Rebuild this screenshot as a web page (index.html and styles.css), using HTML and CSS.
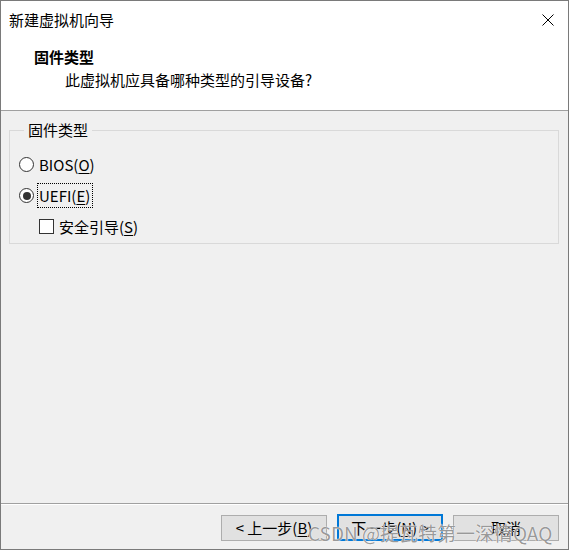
FILE: index.html
```html
<!DOCTYPE html>
<html lang="zh-CN">
<head>
<meta charset="utf-8">
<title>新建虚拟机向导</title>
<link rel="stylesheet" href="styles.css">
</head>
<body>
<div class="window">
  <div class="top">
    <div class="titlebar">
      <span class="title">新建虚拟机向导</span>
      <svg class="close" width="12" height="12" viewBox="0 0 12 12"><path d="M0.5 0.5L11.5 11.5M11.5 0.5L0.5 11.5" stroke="#000" stroke-width="1" fill="none"/></svg>
    </div>
    <div class="header">
      <div class="h-title">固件类型</div>
      <div class="h-sub">此虚拟机应具备哪种类型的引导设备?</div>
    </div>
  </div>
  <div class="content">
    <fieldset class="group">
      <legend class="legend">固件类型</legend>
      <div class="row">
        <span class="radio"></span>
        <span class="label">BIOS(<u>O</u>)</span>
      </div>
      <div class="row">
        <span class="radio checked"></span>
        <span class="label focus">UEFI(<u>E</u>)</span>
      </div>
      <div class="row sub">
        <span class="check"></span>
        <span class="label">安全引导(<u>S</u>)</span>
      </div>
    </fieldset>
  </div>
  <div class="footer">
    <button class="btn">&lt; 上一步(<u>B</u>)</button>
    <button class="btn default">下一步(<u>N</u>) &gt;</button>
    <button class="btn">取消</button>
    <span class="watermark">CSDN @提瓦特第一深情QAQ</span>
  </div>
</div>
</body>
</html>
```

FILE: styles.css
```css
html, body {
  margin: 0;
  padding: 0;
  background: #ffffff;
}
body {
  font-family: "Noto Sans CJK SC", "Noto Sans", sans-serif;
  font-size: 15px;
  color: #000;
}
.window {
  position: relative;
  width: 569px;
  height: 550px;
  box-sizing: border-box;
  border: 1px solid #7a7a7a;
  background: #f0f0f0;
  display: flex;
  flex-direction: column;
}
.top {
  background: #ffffff;
  border-bottom: 1px solid #a0a0a0;
}
.titlebar {
  height: 38px;
  display: flex;
  align-items: center;
  justify-content: space-between;
  padding: 0 14px 0 8px;
}
.title {
  line-height: 38px;
  font-size: 15px;
}
.close {
  display: block;
  margin-top: -1px;
}
.header {
  height: 71px;
  box-sizing: border-box;
  padding: 8px 0 0 33px;
}
.h-title {
  font-weight: bold;
  line-height: 20px;
}
.h-sub {
  line-height: 20px;
  margin: 3px 0 0 31px;
}
.content {
  flex: 1;
  padding: 9px 9px 0 8px;
}
.group {
  margin: 0;
  padding: 9px 0 1px 9px;
  border: 1px solid #d9d9d9;
  min-width: 0;
}
.legend {
  margin-left: 5px;
  padding: 0 4px;
  line-height: 20px;
}
.row {
  height: 31px;
  display: flex;
  align-items: center;
}
.row.sub {
  padding-left: 20px;
}
.radio {
  width: 15px;
  height: 15px;
  box-sizing: border-box;
  border: 1px solid #333;
  border-radius: 50%;
  background: #fff;
  display: flex;
  align-items: center;
  justify-content: center;
  margin-right: 5px;
}
.radio.checked::after {
  content: "";
  width: 8px;
  height: 8px;
  border-radius: 50%;
  background: #333;
}
.check {
  width: 15px;
  height: 15px;
  box-sizing: border-box;
  border: 1px solid #333;
  background: #fff;
  margin-right: 5px;
}
.label {
  line-height: 23px;
  border: 1px solid transparent;
  padding: 0 1px 0 0;
  margin-left: -1px;
}
.label.focus {
  border: 1px dotted #000;
  padding: 0 2px 0 1px;
  margin-left: -2px;
}
u {
  text-decoration: underline;
  text-underline-offset: 2px;
}
.footer {
  height: 46px;
  box-sizing: border-box;
  border-top: 1px solid #a0a0a0;
  box-shadow: inset 0 1px 0 #ffffff;
  display: flex;
  justify-content: flex-end;
  align-items: flex-start;
  gap: 10px;
  padding: 11px 9px 0 0;
}
.btn {
  width: 106px;
  height: 26px;
  box-sizing: border-box;
  border: 1px solid #adadad;
  background: #e1e1e1;
  font-family: "Noto Sans CJK SC", "Noto Sans", sans-serif;
  font-size: 15px;
  color: #000;
  padding: 0;
  line-height: 22px;
  margin: 0;
}
.btn.default {
  border: 2px solid #0078d7;
  height: 27px;
  margin-top: -1px;
}
.watermark {
  position: absolute;
  left: 307px;
  top: 519px;
  font-family: "Noto Sans CJK SC", "Noto Sans", sans-serif;
  font-size: 19px;
  line-height: 26px;
  color: rgba(120, 120, 120, 0.75);
  text-shadow: 0 0 1px #fff, 0 0 1px #fff;
  white-space: nowrap;
  pointer-events: none;
}
```
